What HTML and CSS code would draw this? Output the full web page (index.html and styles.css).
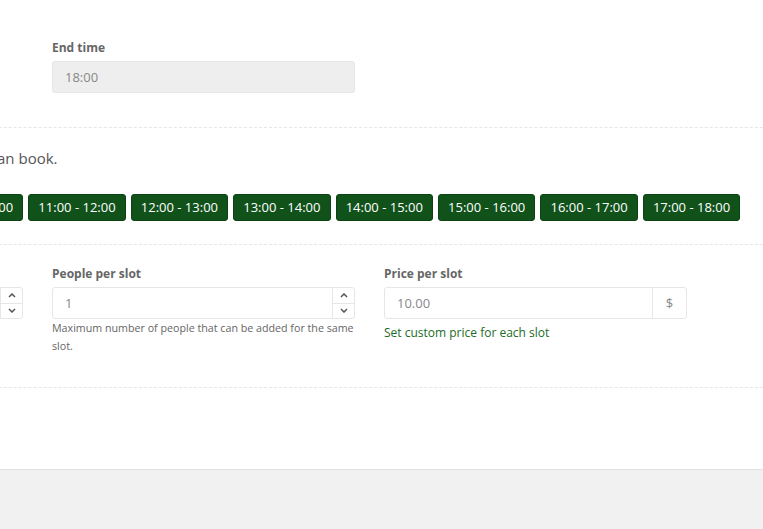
FILE: index.html
```html
<!DOCTYPE html>
<html>
<head>
<meta charset="utf-8">
<link rel="stylesheet" href="styles.css">
</head>
<body>
<div class="panel">
  <div class="inner">
    <section class="sec sec-times">
      <div class="grid">
        <div class="field col2">
          <label class="lbl">End time</label>
          <div class="input disabled">18:00</div>
        </div>
      </div>
    </section>
    <section class="sec sec-slots">
      <p class="intro">These are the time slots in which customers can book.</p>
      <div class="slots">
        <span class="slot">08:00 - 09:00</span>
        <span class="slot">09:00 - 10:00</span>
        <span class="slot">10:00 - 11:00</span>
        <span class="slot">11:00 - 12:00</span>
        <span class="slot">12:00 - 13:00</span>
        <span class="slot">13:00 - 14:00</span>
        <span class="slot">14:00 - 15:00</span>
        <span class="slot">15:00 - 16:00</span>
        <span class="slot">16:00 - 17:00</span>
        <span class="slot">17:00 - 18:00</span>
      </div>
    </section>
    <section class="sec sec-opts">
      <div class="grid">
        <div class="field">
          <label class="lbl">Slot duration</label>
          <div class="input number"><span class="val">60</span>
            <span class="spin"><span class="up"><svg viewBox="0 0 8 5" width="8" height="5"><path d="M1 4L4 1L7 4" fill="none" stroke="#555" stroke-width="1.5"/></svg></span><span class="down"><svg viewBox="0 0 8 5" width="8" height="5"><path d="M1 1L4 4L7 1" fill="none" stroke="#555" stroke-width="1.5"/></svg></span></span>
          </div>
        </div>
        <div class="field">
          <label class="lbl">People per slot</label>
          <div class="input number"><span class="val">1</span>
            <span class="spin"><span class="up"><svg viewBox="0 0 8 5" width="8" height="5"><path d="M1 4L4 1L7 4" fill="none" stroke="#555" stroke-width="1.5"/></svg></span><span class="down"><svg viewBox="0 0 8 5" width="8" height="5"><path d="M1 1L4 4L7 1" fill="none" stroke="#555" stroke-width="1.5"/></svg></span></span>
          </div>
          <p class="help">Maximum number of people that can be added for the same slot.</p>
        </div>
        <div class="field">
          <label class="lbl">Price per slot</label>
          <div class="input price"><span class="val">10.00</span><span class="addon">$</span></div>
          <a class="link">Set custom price for each slot</a>
        </div>
      </div>
    </section>
  </div>
</div>
</body>
</html>
```
FILE: styles.css
```css
html, body {
  margin: 0;
  padding: 0;
  background: #f1f1f1;
  font-family: "Open Sans", "Liberation Sans", sans-serif;
  color: #555;
}
.panel {
  background: #fff;
  height: 469px;
  border-bottom: 1px solid #e2e2e2;
  overflow: hidden;
}
.inner {
  margin-left: -332px;
  width: 1200px;
}
.sec {
  border-bottom: 1px dashed #e6e6e6;
  padding-left: 52px;
}
.grid {
  display: grid;
  grid-template-columns: 303px 303px 303px;
  column-gap: 29px;
}
.col2 {
  grid-column: 2;
}
.sec-times {
  padding-top: 39px;
  padding-bottom: 34px;
}
.lbl {
  display: block;
  font-size: 12px;
  font-weight: 700;
  color: #666;
  line-height: 17px;
  margin-bottom: 5px;
}
.input {
  box-sizing: border-box;
  height: 32px;
  border: 1px solid #e6e6e6;
  border-radius: 3px;
  font-size: 13px;
  color: #888;
  padding-left: 12px;
  display: flex;
  align-items: center;
  background: #fff;
}
.input.disabled {
  background: #eeeeee;
  color: #888;
}
.sec-slots {
  padding-top: 19px;
  padding-bottom: 23px;
}
.intro {
  margin: 0 0 25px 0;
  font-size: 15px;
  line-height: 22px;
  color: #555;
  text-indent: -40px;
}
.slots {
  display: flex;
  gap: 5px;
  margin-left: 1px;
}
.slot {
  box-sizing: border-box;
  height: 27px;
  background: #11521b;
  border: 1px solid #0b4313;
  border-radius: 3px;
  color: #fff;
  font-size: 13px;
  line-height: 25px;
  padding: 0 9.1px;
  white-space: nowrap;
}
.sec-opts {
  padding-top: 20px;
  padding-bottom: 32px;
}
.val {
  flex: 1;
}
.number {
  padding-right: 0;
}
.spin {
  width: 21px;
  height: 30px;
  border-left: 1px solid #e6e6e6;
  display: flex;
  flex-direction: column;
}
.spin .up, .spin .down {
  flex: 1;
  display: flex;
  align-items: center;
  justify-content: center;
}
.spin .up {
  border-bottom: 1px solid #e6e6e6;
}
.price {
  padding-right: 0;
}
.addon {
  width: 33px;
  height: 30px;
  border-left: 1px solid #e6e6e6;
  display: flex;
  align-items: center;
  justify-content: center;
  color: #888;
  font-size: 13px;
}
.help {
  margin: 0;
  font-size: 10.7px;
  line-height: 18px;
  color: #666;
}
.link {
  display: block;
  margin-top: 5px;
  font-size: 12px;
  line-height: 18px;
  color: #1b6b27;
}
```
